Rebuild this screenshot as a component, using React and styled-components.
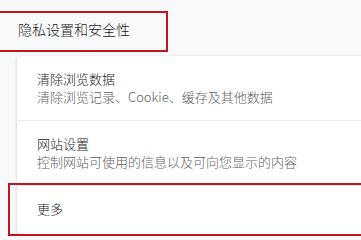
import React from "react";
import styled, { createGlobalStyle } from "styled-components";

const GlobalStyle = createGlobalStyle`
  html, body {
    margin: 0;
    padding: 0;
    background: #f8f9fa;
    overflow: hidden;
  }
  body {
    font-family: "Noto Sans CJK SC", "Noto Sans", sans-serif;
    font-weight: 300;
  }
`;

const Page = styled.div`
  position: relative;
  width: 361px;
  height: 239px;
  overflow: hidden;
`;

const SectionTitle = styled.div`
  height: 56px;
  display: flex;
  align-items: center;
  padding-left: 18px;
  padding-top: 2px;
  box-sizing: border-box;
  font-size: 14px;
  color: #222;
`;

const Card = styled.div`
  margin-left: 17px;
  width: 400px;
  background: #fff;
  border-radius: 4px;
  box-shadow: 0 1px 2px rgba(60, 64, 67, 0.18), 0 1px 3px 1px rgba(60, 64, 67, 0.08);
`;

const Row = styled.div`
  padding: ${(p) => (p.$single ? "14px 20px 16px" : "14px 20px")};
  border-top: ${(p) => (p.$first ? "none" : "1px solid #ebebeb")};
  display: flex;
  flex-direction: column;
`;

const Label = styled.div`
  font-size: 13px;
  line-height: 18px;
  color: #222;
`;

const Sub = styled.div`
  font-size: 13px;
  line-height: 18px;
  color: #606060;
`;

const Mark = styled.div`
  position: absolute;
  border: 2px solid #c0161e;
  box-sizing: border-box;
  pointer-events: none;
`;

const rows = [
  { label: "清除浏览数据", sub: "清除浏览记录、Cookie、缓存及其他数据" },
  { label: "网站设置", sub: "控制网站可使用的信息以及可向您显示的内容" },
  { label: "更多" },
];

export default function App() {
  return (
    <Page>
      <GlobalStyle />
      <SectionTitle>隐私设置和安全性</SectionTitle>
      <Card>
        {rows.map((r, i) => (
          <Row key={r.label} $first={i === 0} $single={!r.sub}>
            <Label>{r.label}</Label>
            {r.sub && <Sub>{r.sub}</Sub>}
          </Row>
        ))}
      </Card>
      <Mark style={{ left: -4, top: 11, width: 172, height: 41 }} />
      <Mark style={{ left: 8, top: 183, width: 380, height: 53 }} />
    </Page>
  );
}
